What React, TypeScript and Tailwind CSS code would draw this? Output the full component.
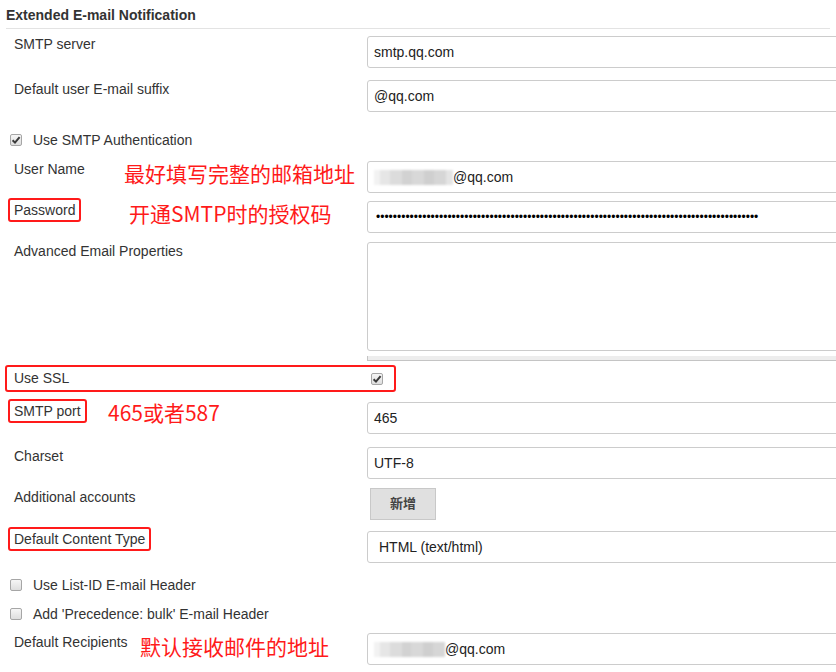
import React from "react";

const font = { fontFamily: '"Liberation Sans", Arial, "Noto Sans CJK SC", sans-serif' };

function Check({ checked }: { checked?: boolean }) {
  return (
    <span className="inline-flex h-[12px] w-[12px] shrink-0 items-center justify-center rounded-[2px] border border-[#a6a6a6] bg-gradient-to-b from-[#f6f6f6] to-[#dedede]">
      {checked && (
        <svg width="10" height="10" viewBox="0 0 10 10">
          <path d="M1.6 5.2 L4 7.6 L8.6 2.2" fill="none" stroke="#3a3a3a" strokeWidth="2" />
        </svg>
      )}
    </span>
  );
}

function Field({ children, extra }: { children?: React.ReactNode; extra?: string }) {
  return (
    <div
      className={
        "flex h-[32px] w-[480px] shrink-0 items-center rounded-[3px] border border-[#cccccc] bg-white pl-[6px] text-[14px] text-[#222] " +
        (extra ?? "")
      }
    >
      {children}
    </div>
  );
}

function Blur({ w }: { w: string }) {
  return (
    <span className={"flex h-[15px] shrink-0 items-stretch blur-[1.2px] " + w}>
      <span className="w-[6px] bg-[#f2f2f2]" />
      <span className="w-[10px] bg-[#e6e6e6]" />
      <span className="w-[12px] bg-[#dcdcdc]" />
      <span className="w-[10px] bg-[#d2d2d2]" />
      <span className="w-[12px] bg-[#d8d8d8]" />
      <span className="w-[10px] bg-[#cfcfcf]" />
      <span className="w-[12px] bg-[#d6d6d6]" />
      <span className="flex-1 bg-[#e4e4e4]" />
    </span>
  );
}

const Red = ({ children, extra }: { children: React.ReactNode; extra: string }) => (
  <span
    className={"block text-[21px] font-normal leading-[28px] text-[#ff1a1a] " + extra}
    style={{ fontFamily: '"Noto Sans CJK SC", "Liberation Sans", sans-serif' }}
  >
    {children}
  </span>
);

const Boxed = ({ children, extra }: { children: React.ReactNode; extra: string }) => (
  <span
    className={
      "block w-fit rounded-[3px] border-2 border-[#ff1a1a] px-[4px] text-[14px] leading-5 text-[#333] ml-[-6px] " + extra
    }
  >
    {children}
  </span>
);

const LabelCol = "w-[361px] shrink-0";

export default function App() {
  const dots = "•".repeat(91);
  return (
    <div className="h-[672px] w-[836px] overflow-hidden bg-white px-[6px] text-[#333]" style={font}>
      <div className="h-[29px] border-b border-[#e3e3e3] text-[14px] font-bold leading-[30px] text-[#333]">
        Extended E-mail Notification
      </div>

      {/* SMTP server */}
      <div className="mt-[7px] flex items-start">
        <div className="w-[361px] shrink-0 pl-[8px] text-[14px] leading-4">SMTP server</div>
        <Field>smtp.qq.com</Field>
      </div>

      {/* suffix */}
      <div className="mt-[12px] flex items-start">
        <div className="w-[361px] shrink-0 pl-[8px] pt-[1px] text-[14px] leading-4">Default user E-mail suffix</div>
        <Field>@qq.com</Field>
      </div>

      {/* Use SMTP Auth */}
      <div className="mt-[16px] flex h-[24px] items-center pl-[4px] text-[14px]">
        <Check checked />
        <span className="ml-[11px]">Use SMTP Authentication</span>
      </div>

      {/* User Name */}
      <div className="mt-[9px] flex items-start">
        <div className={"flex items-start " + LabelCol}>
          <div className="w-[118px] shrink-0 pl-[8px] text-[14px] leading-4">User Name</div>
          <Red extra="mt-[-2px]">最好填写完整的邮箱地址</Red>
        </div>
        <Field>
          <Blur w="w-[79px]" />
          <span>@qq.com</span>
        </Field>
      </div>

      {/* Password */}
      <div className="mt-[8px] flex items-start">
        <div className={"flex items-start " + LabelCol}>
          <div className="w-[123px] shrink-0 pl-[8px]">
            <Boxed extra="mt-[-3px]">Password</Boxed>
          </div>
          <Red extra="mt-[-2px]">开通SMTP时的授权码</Red>
        </div>
        <Field>
          <span className="pl-[2px] text-[12px] text-black">{dots}</span>
        </Field>
      </div>

      {/* Advanced */}
      <div className="mt-[9px] flex items-start">
        <div className="w-[361px] shrink-0 pl-[8px] pt-[1px] text-[14px] leading-4">Advanced Email Properties</div>
        <div className="flex w-[480px] shrink-0 flex-col">
          <div className="h-[109px] rounded-[3px] border border-[#cccccc] bg-white" />
          <div className="mt-[5px] h-[5px] border-b border-l border-[#c4c4c4] bg-[#ededed]" />
        </div>
      </div>

      {/* Use SSL */}
      <div className="ml-[-1px] mt-[4px] flex h-[27px] w-[391px] items-center justify-between rounded-[3px] border-2 border-[#ff1a1a] pl-[7px] pr-[11px] text-[14px]">
        <span>Use SSL</span>
        <Check checked />
      </div>

      {/* SMTP port */}
      <div className="mt-[10px] flex items-start">
        <div className={"flex items-start " + LabelCol}>
          <div className="w-[102px] shrink-0 pl-[8px]">
            <Boxed extra="mt-[-3px]">SMTP port</Boxed>
          </div>
          <Red extra="mt-[-4px]">465或者587</Red>
        </div>
        <Field>465</Field>
      </div>

      {/* Charset */}
      <div className="mt-[13px] flex items-start">
        <div className="w-[361px] shrink-0 pl-[8px] pt-[1px] text-[14px] leading-4">Charset</div>
        <Field>UTF-8</Field>
      </div>

      {/* Additional accounts */}
      <div className="mt-[9px] flex items-start">
        <div className="w-[361px] shrink-0 pl-[8px] pt-[1px] text-[14px] leading-4">Additional accounts</div>
        <button className="ml-[3px] flex h-[32px] w-[66px] shrink-0 items-center justify-center border border-[#c8c8c8] bg-[#e0e0e0] text-[13px] font-semibold text-[#444]">
          新增
        </button>
      </div>

      {/* Default Content Type */}
      <div className="mt-[11px] flex items-start">
        <div className="w-[361px] shrink-0 pl-[8px]">
          <Boxed extra="mt-[-4px]">Default Content Type</Boxed>
        </div>
        <Field extra="h-[31px] pl-[11px]">HTML (text/html)</Field>
      </div>

      {/* List-ID */}
      <div className="mt-[10px] flex h-[24px] items-center pl-[4px] text-[14px]">
        <Check />
        <span className="ml-[11px]">Use List-ID E-mail Header</span>
      </div>

      {/* Precedence */}
      <div className="mt-[5px] flex h-[24px] items-center pl-[4px] text-[14px]">
        <Check />
        <span className="ml-[11px]">Add 'Precedence: bulk' E-mail Header</span>
      </div>

      {/* Default Recipients */}
      <div className="mt-[7px] flex items-start">
        <div className={"flex items-start " + LabelCol}>
          <div className="w-[134px] shrink-0 pl-[8px] pt-[1px] text-[14px] leading-4">Default Recipients</div>
          <Red extra="mt-[-1px]">默认接收邮件的地址</Red>
        </div>
        <Field>
          <Blur w="w-[71px]" />
          <span>@qq.com</span>
        </Field>
      </div>
    </div>
  );
}
